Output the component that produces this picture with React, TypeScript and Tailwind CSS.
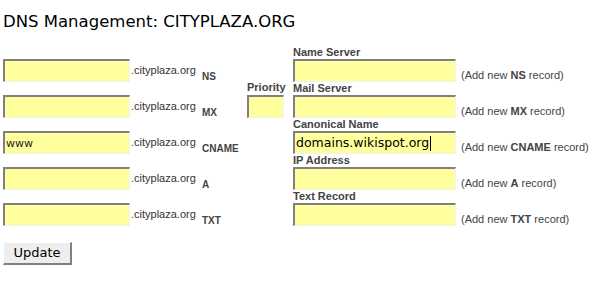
const rows = [
  { type: "NS", host: "", title: "Name Server", value: "" },
  { type: "MX", host: "", title: "Mail Server", value: "", priority: true },
  { type: "CNAME", host: "www", title: "Canonical Name", value: "domains.wikispot.org", caret: true },
  { type: "A", host: "", title: "IP Address", value: "" },
  { type: "TXT", host: "", title: "Text Record", value: "" },
];

function Field({ width, value, big, caret }: { width: string; value?: string; big?: boolean; caret?: boolean }) {
  return (
    <div
      className={`${width} h-[23px] bg-[#ffff9e] border-t-2 border-l-2 border-r border-b border-t-[#808080] border-l-[#808080] border-r-[#f2f2f2] border-b-[#f2f2f2] flex items-center pl-[1px] overflow-hidden whitespace-nowrap`}
    >
      {value ? (
        <span
          className={
            big
              ? "text-[12.5px] text-black font-['DejaVu_Sans',sans-serif] leading-none"
              : "text-[11px] text-[#222] font-['DejaVu_Sans',sans-serif] leading-none"
          }
        >
          {value}
        </span>
      ) : null}
      {caret ? <span className="w-px h-[15px] bg-black ml-[1px]" /> : null}
    </div>
  );
}

export default function App() {
  return (
    <div className="w-[606px] h-[285px] bg-white font-['Liberation_Sans',Arial,sans-serif] text-[#333]">
      <h1 className="pl-[3px] pt-[12px] h-[46px] text-[16.5px] leading-[19px] text-black font-['DejaVu_Sans',sans-serif]">
        DNS Management: CITYPLAZA.ORG
      </h1>
      <div className="flex flex-col">
        {rows.map((r) => (
          <div key={r.type} className="flex items-end h-[36px]">
            <div className="w-[131px] pl-[3px]">
              <Field width="w-[127px]" value={r.host} />
            </div>
            <div className="w-[71px] text-[11px] leading-[13px] pb-[5px] text-[#333]">.cityplaza.org</div>
            <div className="w-[45px] text-[10px] leading-[12px] font-bold text-[#444] -mb-[1px]">{r.type}</div>
            <div className="w-[46px] flex flex-col">
              {r.priority ? (
                <>
                  <div className="text-[11px] leading-[13px] font-bold text-[#444] pb-[1px]">Priority</div>
                  <Field width="w-[37px]" />
                </>
              ) : null}
            </div>
            <div className="w-[168px] flex flex-col">
              <div className="text-[11px] leading-[13px] font-bold text-[#444]">{r.title}</div>
              <Field width="w-[163px]" value={r.value} big caret={r.caret} />
            </div>
            <div className="text-[11px] leading-[13px] text-[#444]">
              (Add new <b className="font-bold">{r.type}</b> record)
            </div>
          </div>
        ))}
      </div>
      <div className="pl-[3px] pt-[14px]">
        <button className="w-[69px] h-[23px] bg-[#eeeeee] border border-t-white border-l-white border-r-2 border-b-2 border-r-[#808080] border-b-[#808080] text-[13px] leading-none text-black font-['DejaVu_Sans',sans-serif]">
          Update
        </button>
      </div>
    </div>
  );
}
